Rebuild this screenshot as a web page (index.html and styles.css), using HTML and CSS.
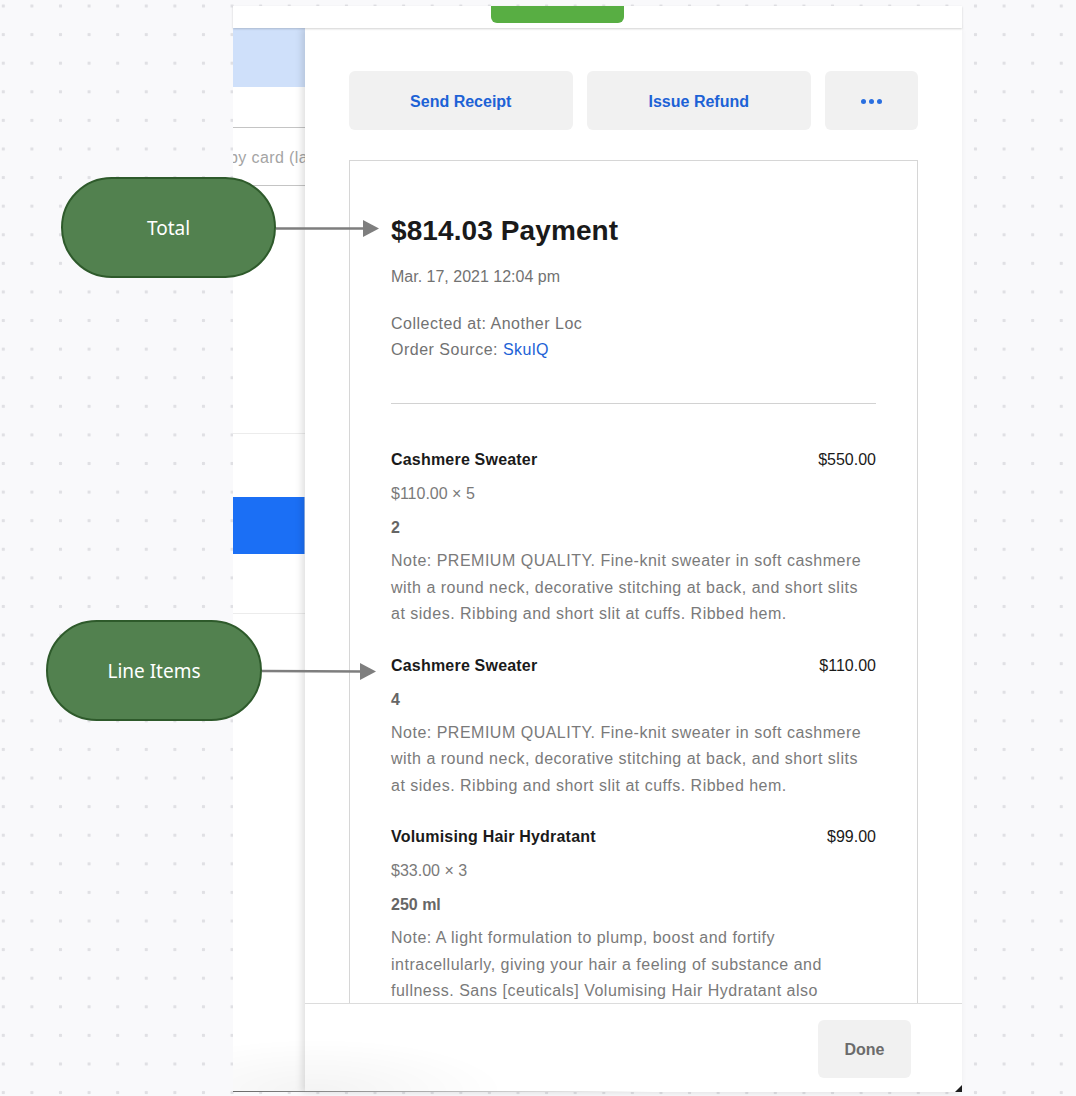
FILE: index.html
```html
<!DOCTYPE html>
<html lang="en">
<head>
<meta charset="utf-8">
<title>Payment</title>
<link rel="stylesheet" href="styles.css">
</head>
<body>
<div class="canvas">
  <div class="app">
    <div class="topbar"><div class="tab"></div></div>
    <div class="workspace">
      <div class="behind">
        <div class="b-hl"></div>
        <div class="b-field"><span>by card (last 4)</span></div>
        <div class="b-rule"></div>
        <div class="b-btn"></div>
        <div class="b-rule b-rule-2"></div>
      </div>
      <div class="modal">
        <div class="modal-body">
          <div class="actions">
            <button class="action">Send Receipt</button>
            <button class="action">Issue Refund</button>
            <button class="action action-more" aria-label="More"><span class="dot"></span><span class="dot"></span><span class="dot"></span></button>
          </div>
          <div class="receipt">
            <h1 class="title">$814.03 Payment</h1>
            <p class="date">Mar. 17, 2021 12:04 pm</p>
            <div class="meta">
              <p>Collected at: Another Loc</p>
              <p>Order Source: <a class="link" href="#">SkulQ</a></p>
            </div>
            <hr class="divider">
            <div class="items">
              <div class="item">
                <div class="item-head"><span class="item-name">Cashmere Sweater</span><span class="item-price">$550.00</span></div>
                <div class="item-sub">$110.00 × 5</div>
                <div class="item-var">2</div>
                <p class="item-note">Note: PREMIUM QUALITY. Fine-knit sweater in soft cashmere with a round neck, decorative stitching at back, and short slits at sides. Ribbing and short slit at cuffs. Ribbed hem.</p>
              </div>
              <div class="item">
                <div class="item-head"><span class="item-name">Cashmere Sweater</span><span class="item-price">$110.00</span></div>
                <div class="item-var">4</div>
                <p class="item-note">Note: PREMIUM QUALITY. Fine-knit sweater in soft cashmere with a round neck, decorative stitching at back, and short slits at sides. Ribbing and short slit at cuffs. Ribbed hem.</p>
              </div>
              <div class="item">
                <div class="item-head"><span class="item-name">Volumising Hair Hydratant</span><span class="item-price">$99.00</span></div>
                <div class="item-sub">$33.00 × 3</div>
                <div class="item-var">250 ml</div>
                <p class="item-note">Note: A light formulation to plump, boost and fortify intracellularly, giving your hair a feeling of substance and fullness. Sans [ceuticals] Volumising Hair Hydratant also contains natural extracts that help protect your hair.</p>
              </div>
            </div>
          </div>
        </div>
        <div class="modal-footer"><button class="done">Done</button></div>
      </div>
    </div>
  </div>

  <div class="pill pill-total">Total</div>
  <div class="pill pill-items">Line Items</div>

  <svg class="arrows" width="1076" height="1096" viewBox="0 0 1076 1096" aria-hidden="true">
    <line x1="276" y1="228.5" x2="366" y2="228.5" stroke="#7e7e7e" stroke-width="2.5"/>
    <polygon points="363,220 379,228.5 363,237" fill="#7e7e7e"/>
    <line x1="262" y1="671" x2="362" y2="671.5" stroke="#7e7e7e" stroke-width="2.5"/>
    <polygon points="360,663 376,671.5 360,680" fill="#7e7e7e"/>
    <polygon points="962,1085 962,1092 955,1092" fill="#1e1e1e"/>
  </svg>
</div>
</body>
</html>
```
FILE: styles.css
```css
* { box-sizing: border-box; }

html, body {
  margin: 0;
  padding: 0;
}

body {
  font-family: "Liberation Sans", Arial, sans-serif;
  color: #1a1a1a;
}

.canvas {
  position: relative;
  width: 1076px;
  height: 1096px;
  overflow: hidden;
  background-color: #f9f9fb;
  background-image: radial-gradient(circle, #e0e0e4 1.4px, rgba(224,224,228,0) 2px);
  background-size: 28.6px 28.6px;
  background-position: -11px -8.3px;
}

/* ---------- app window ---------- */
.app {
  position: absolute;
  left: 233px;
  top: 6px;
  width: 729px;
  height: 1086px;
  display: flex;
  flex-direction: column;
  background: #fff;
}

.app::after {
  content: "";
  position: absolute;
  left: 0;
  bottom: 0;
  width: 420px;
  height: 70px;
  background: radial-gradient(ellipse 60% 100% at 20% 100%, rgba(0,0,0,0.045), rgba(0,0,0,0) 75%);
  border-bottom: 1px solid transparent;
  border-image: linear-gradient(to right, #6a6a6a, rgba(106,106,106,0)) 1;
  pointer-events: none;
  z-index: 3;
}

.topbar {
  height: 22px;
  background: #fff;
  box-shadow: 0 1px 2px rgba(0,0,0,0.18);
  position: relative;
  z-index: 2;
  flex: none;
}

.tab {
  margin-left: 258px;
  width: 133px;
  height: 17px;
  background: #58ae43;
  border-radius: 0 0 6px 6px;
}

.workspace {
  flex: 1;
  display: flex;
  min-height: 0;
}

/* ---------- page behind the modal ---------- */
.behind {
  width: 72px;
  flex: none;
  background: #fff;
  display: flex;
  flex-direction: column;
  overflow: hidden;
}

.b-hl {
  height: 59px;
  background: #cfe0fa;
}

.b-field {
  margin-top: 40px;
  height: 59px;
  border-top: 1px solid #c4c4c4;
  border-bottom: 1px solid #c4c4c4;
  display: flex;
  align-items: center;
  overflow: hidden;
  white-space: nowrap;
}

.b-field span {
  margin-left: -4px;
  padding-top: 2px;
  font-size: 16px;
  letter-spacing: 0.4px;
  color: #a4a4a4;
}

.b-rule {
  margin-top: 247px;
  height: 1px;
  background: #ececec;
}

.b-btn {
  margin-top: 63px;
  height: 57px;
  background: #1b6ff5;
  border-right: 1px solid #8fb4f0;
}

.b-rule-2 {
  margin-top: 59px;
}

/* ---------- modal ---------- */
.modal {
  flex: 1;
  display: flex;
  flex-direction: column;
  background: #fff;
  position: relative;
  z-index: 1;
  box-shadow: -3px 0 7px rgba(0,0,0,0.13);
  min-height: 0;
}

.modal-body {
  flex: 1;
  min-height: 0;
  overflow: hidden;
  padding: 43px 44px 0;
}

.actions {
  display: flex;
  gap: 14.5px;
  height: 59px;
}

.action {
  flex: 1;
  border: 0;
  border-radius: 6px;
  background: #f1f1f1;
  color: #1d62d6;
  font-family: "Liberation Sans", Arial, sans-serif;
  font-size: 16px;
  font-weight: 700;
  padding: 2px 0 0;
  cursor: pointer;
}

.action-more {
  flex: none;
  width: 93px;
  display: flex;
  align-items: center;
  justify-content: center;
  gap: 3px;
}

.dot {
  width: 5px;
  height: 5px;
  border-radius: 50%;
  background: #2a6fe0;
}

.receipt {
  margin-top: 30px;
  border: 1px solid #d6d6d6;
  padding: 52px 41px 40px 41px;
}

.title {
  margin: 0;
  font-size: 28px;
  line-height: 36px;
  font-weight: 700;
  letter-spacing: 0.1px;
  color: #1a1a1a;
}

.date {
  margin: 16px 0 0;
  font-size: 16px;
  line-height: 24px;
  color: #727272;
}

.meta {
  margin-top: 22px;
}

.meta p {
  margin: 0;
  font-size: 16px;
  line-height: 26px;
  letter-spacing: 0.5px;
  color: #727272;
}

.link {
  color: #1d62d6;
  text-decoration: none;
}

.divider {
  margin: 40px 0 0;
  border: 0;
  height: 1px;
  background: #d2d2d2;
}

.items {
  margin-top: 44px;
  display: flex;
  flex-direction: column;
  gap: 26px;
}

.item {
  display: flex;
  flex-direction: column;
  gap: 10px;
}

.item-head {
  display: flex;
  justify-content: space-between;
  font-size: 16px;
  line-height: 24px;
}

.item-name {
  font-weight: 700;
  letter-spacing: 0.2px;
  color: #1a1a1a;
}

.item-price {
  color: #1a1a1a;
}

.item-sub {
  font-size: 16px;
  line-height: 24px;
  color: #7a7a7a;
}

.item-var {
  font-size: 16px;
  line-height: 24px;
  font-weight: 700;
  color: #666;
}

.item-note {
  margin: -2px 0 0;
  font-size: 16px;
  line-height: 26.5px;
  letter-spacing: 0.5px;
  color: #7a7a7a;
}

.modal-footer {
  flex: none;
  height: 89px;
  border-top: 1px solid #dcdcdc;
  display: flex;
  justify-content: flex-end;
  align-items: flex-start;
  padding: 16px 51px 0 0;
}

.done {
  width: 93px;
  height: 58px;
  border: 0;
  border-radius: 6px;
  background: #f1f1f1;
  color: #6b6b6b;
  font-family: "Liberation Sans", Arial, sans-serif;
  font-size: 16px;
  font-weight: 700;
  padding: 2px 0 0;
}

/* ---------- annotations ---------- */
.pill {
  position: absolute;
  width: 215px;
  height: 101px;
  border-radius: 51px;
  background: #52814f;
  border: 2px solid #2e5a2b;
  color: #fff;
  font-family: "Noto Sans", "Open Sans", sans-serif;
  font-size: 19px;
  display: flex;
  align-items: center;
  justify-content: center;
  z-index: 5;
}

.pill-total {
  left: 61px;
  top: 177px;
}

.pill-items {
  left: 46px;
  top: 620px;
  width: 216px;
}

.arrows {
  position: absolute;
  left: 0;
  top: 0;
  pointer-events: none;
  z-index: 6;
}
```
